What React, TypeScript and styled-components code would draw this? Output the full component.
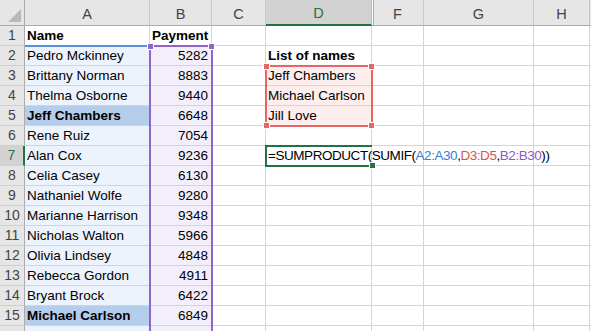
import React from 'react';
import styled, { createGlobalStyle } from 'styled-components';

const GlobalStyle = createGlobalStyle`
  body {
    margin: 0;
    background: #ffffff;
    font-family: 'Liberation Sans', Arial, sans-serif;
  }
`;

interface IColumn {
  key: string;
  width: number;
}

const columns: IColumn[] = [
  { key: 'A', width: 125 },
  { key: 'B', width: 62 },
  { key: 'C', width: 54 },
  { key: 'D', width: 106 },
  { key: 'F', width: 52 },
  { key: 'G', width: 110 },
  { key: 'H', width: 56 },
];

const ROW_HEAD = 25;
const COL_HEAD = 26;
const ROW_H = 20;

const payments: [string, number][] = [
  ['Pedro Mckinney', 5282],
  ['Brittany Norman', 8883],
  ['Thelma Osborne', 9440],
  ['Jeff Chambers', 6648],
  ['Rene Ruiz', 7054],
  ['Alan Cox', 9236],
  ['Celia Casey', 6130],
  ['Nathaniel Wolfe', 9280],
  ['Marianne Harrison', 9348],
  ['Nicholas Walton', 5966],
  ['Olivia Lindsey', 4848],
  ['Rebecca Gordon', 4911],
  ['Bryant Brock', 6422],
  ['Michael Carlson', 6849],
];

const matches = ['Jeff Chambers', 'Michael Carlson'];

const colLeft = (key: string) => {
  let x = ROW_HEAD;
  for (const c of columns) {
    if (c.key === key) return x;
    x += c.width;
  }
  return x;
};
const rowTop = (r: number) => COL_HEAD + (r - 1) * ROW_H;

const Sheet = styled.div`
  position: relative;
  width: 591px;
  height: 331px;
  overflow: hidden;
  display: grid;
  grid-template-columns: ${ROW_HEAD}px ${columns.map((c) => `${c.width}px`).join(' ')} 1fr;
  grid-template-rows: ${COL_HEAD}px;
  grid-auto-rows: ${ROW_H}px;
  font-size: 13.5px;
  color: #000;
`;

const Corner = styled.div`
  position: relative;
  background: #e6e6e6;
  border-right: 1px solid #ababab;
  border-bottom: 1px solid #ababab;
  box-sizing: border-box;

  &::after {
    content: '';
    position: absolute;
    right: 3px;
    bottom: 3px;
    border-left: 13px solid transparent;
    border-bottom: 13px solid #b9b9b9;
  }
`;

const ColHeader = styled.div<{ $selected?: boolean; $afterHidden?: boolean }>`
  box-sizing: border-box;
  display: flex;
  align-items: center;
  justify-content: center;
  padding-top: 2px;
  background: ${(p) => (p.$selected ? '#d2d2d2' : '#e6e6e6')};
  color: ${(p) => (p.$selected ? '#217346' : '#444444')};
  border-right: 1px solid ${(p) => (p.$selected ? '#bdbdbd' : '#c9c9c9')};
  border-bottom: ${(p) => (p.$selected ? '2px solid #217346' : '1px solid #ababab')};
  box-shadow: ${(p) => (p.$afterHidden ? 'inset 1px 0 0 #ffffff, inset 2px 0 0 #b4b4b4' : 'none')};
  font-size: 14.5px;
`;

const RowHeader = styled.div<{ $selected?: boolean }>`
  box-sizing: border-box;
  display: flex;
  align-items: flex-end;
  justify-content: center;
  padding-bottom: 2px;
  background: ${(p) => (p.$selected ? '#d2d2d2' : '#e6e6e6')};
  color: ${(p) => (p.$selected ? '#217346' : '#444444')};
  border-right: ${(p) => (p.$selected ? '2px solid #217346' : '1px solid #ababab')};
  border-bottom: 1px solid #cfcfcf;
  font-size: 14px;
`;

const Cell = styled.div<{ $fill?: string; $right?: boolean; $bold?: boolean; $over?: boolean }>`
  box-sizing: border-box;
  position: relative;
  display: flex;
  align-items: flex-end;
  justify-content: ${(p) => (p.$right ? 'flex-end' : 'flex-start')};
  padding: 0 3px 2px 2px;
  background: ${(p) => p.$fill ?? '#ffffff'};
  border-right: 1px solid #d4d4d4;
  border-bottom: 1px solid #d4d4d4;
  font-weight: ${(p) => (p.$bold ? 700 : 400)};
  white-space: nowrap;
  overflow: ${(p) => (p.$over ? 'visible' : 'hidden')};
  z-index: ${(p) => (p.$over ? 2 : 'auto')};
`;

const Formula = styled.span`
  letter-spacing: -0.45px;
`;

const Ref = styled.span<{ $color: string }>`
  color: ${(p) => p.$color};
`;

const RangeBox = styled.div<{ $color: string; $noRight?: boolean; $noSides?: boolean }>`
  position: absolute;
  box-sizing: border-box;
  z-index: 3;
  pointer-events: none;
  border-top: 2px solid ${(p) => p.$color};
  border-left: ${(p) => (p.$noSides ? 'none' : `2px solid ${p.$color}`)};
  border-right: ${(p) => (p.$noSides || p.$noRight ? 'none' : `2px solid ${p.$color}`)};
  border-bottom: ${(p) => (p.$noSides ? 'none' : `2px solid ${p.$color}`)};
`;

const Handle = styled.span<{ $color: string; $x: 'left' | 'right'; $y: 'top' | 'bottom' }>`
  position: absolute;
  width: 5px;
  height: 5px;
  background: ${(p) => p.$color};
  border: 1px solid #ffffff;
  ${(p) => `${p.$x}: -4px;`}
  ${(p) => `${p.$y}: -4px;`}
`;

const BLUE = '#5f8fdc';
const PURPLE = '#8f65c8';
const RED = '#e46767';
const GREEN = '#217346';

const A_FILL = '#edf3fc';
const A_MATCH = '#b4cdeb';
const B_FILL = '#f3effa';
const D_FILL = '#fdeded';

const dValue = (r: number): React.ReactNode => {
  if (r === 2) return 'List of names';
  if (r === 3) return 'Jeff Chambers';
  if (r === 4) return 'Michael Carlson';
  if (r === 5) return 'Jill Love';
  if (r === 7)
    return (
      <Formula>
        =SUMPRODUCT(SUMIF(<Ref $color="#3d7bd8">A2:A30</Ref>,<Ref $color="#d9544f">D3:D5</Ref>,
        <Ref $color="#8a5bc4">B2:B30</Ref>))
      </Formula>
    );
  return null;
};

const App = () => {
  const rows = Array.from({ length: 16 }, (_, i) => i + 1);

  return (
    <>
      <GlobalStyle />
      <Sheet>
        <Corner />
        {columns.map((c) => (
          <ColHeader key={c.key} $selected={c.key === 'D'} $afterHidden={c.key === 'F'}>
            {c.key}
          </ColHeader>
        ))}
        <ColHeader />

        {rows.map((r) => {
          const data = r >= 2 ? payments[r - 2] : undefined;
          const isMatch = data ? matches.includes(data[0]) : false;
          const aFill = r >= 2 ? (isMatch ? A_MATCH : A_FILL) : undefined;
          const bFill = r >= 2 ? B_FILL : undefined;
          const dFill = r >= 3 && r <= 5 ? D_FILL : undefined;

          return (
            <React.Fragment key={r}>
              {/* row 16 only peeks in at the bottom edge, its number is below the fold */}
              <RowHeader $selected={r === 7}>{r < 16 ? r : null}</RowHeader>
              <Cell $fill={aFill} $bold={r === 1 || isMatch}>
                {r === 1 ? 'Name' : data?.[0]}
              </Cell>
              <Cell $fill={bFill} $bold={r === 1} $right={r !== 1}>
                {r === 1 ? 'Payment' : data?.[1]}
              </Cell>
              <Cell />
              <Cell $fill={dFill} $bold={r === 2} $over={r === 7}>
                {dValue(r)}
              </Cell>
              <Cell />
              <Cell />
              <Cell />
              <Cell />
            </React.Fragment>
          );
        })}

        <RangeBox
          $color={BLUE}
          $noSides
          style={{ left: colLeft('A'), top: rowTop(2) - 1, width: 125, height: 2 }}
        />
        <RangeBox
          $color={PURPLE}
          style={{ left: colLeft('B') - 1, top: rowTop(2) - 1, width: 64, height: 400 }}
        >
          <Handle $color={PURPLE} $x="left" $y="top" />
          <Handle $color={PURPLE} $x="right" $y="top" />
        </RangeBox>
        <RangeBox
          $color={RED}
          style={{ left: colLeft('D') - 1, top: rowTop(3) - 1, width: 108, height: 62 }}
        >
          <Handle $color={RED} $x="left" $y="top" />
          <Handle $color={RED} $x="right" $y="top" />
          <Handle $color={RED} $x="left" $y="bottom" />
          <Handle $color={RED} $x="right" $y="bottom" />
        </RangeBox>
        <RangeBox
          $color={GREEN}
          $noRight
          style={{ left: colLeft('D') - 1, top: rowTop(7) - 1, width: 107, height: 22 }}
        >
          <Handle $color={GREEN} $x="right" $y="bottom" />
        </RangeBox>
      </Sheet>
    </>
  );
};

export default App;
